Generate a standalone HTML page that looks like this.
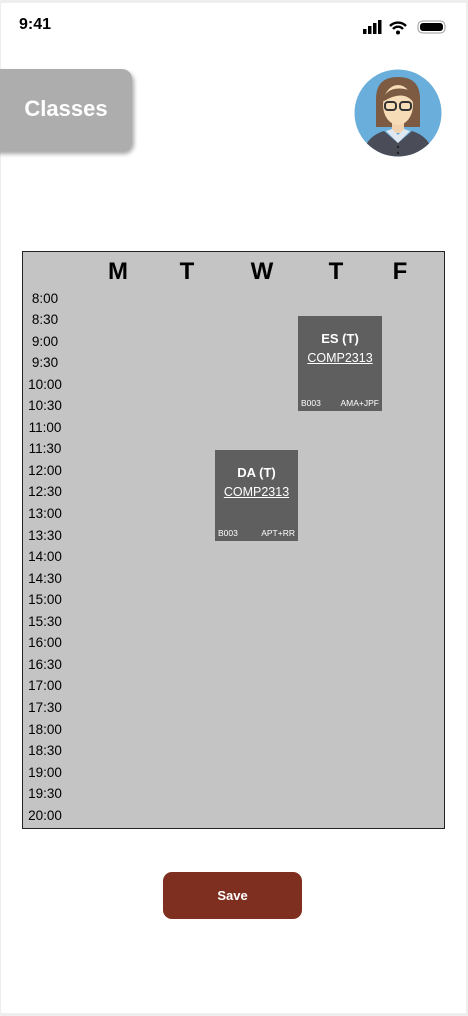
<!DOCTYPE html>
<html><head><style>
body{margin:0;width:468px;height:1016px;background:#eee;font-family:"Liberation Sans",sans-serif;position:relative;overflow:hidden}
.page{position:absolute;left:1px;top:3px;width:465px;height:1010px;background:#fff}
.abs{position:absolute}
.t{position:absolute;left:23px;width:44px;text-align:center;font-size:13.5px;color:#000}
.day{position:absolute;top:258px;font-size:24px;font-weight:bold;transform:translateX(-50%)}
.blk{position:absolute;background:#5f5f5f;color:#fff;text-align:center}
.blk b{display:block;font-size:13px;margin-top:15px}
.blk u{display:block;font-size:12.5px;margin-top:5px}
.blk .f{position:absolute;bottom:3px;left:3px;right:3px;font-size:8.5px;display:flex;justify-content:space-between}
</style></head><body>
<div class="page"></div>
<div class="abs" style="left:19px;top:16px;font-size:16px;font-weight:bold">9:41</div>
<svg class="abs" style="left:362px;top:18px" width="86" height="18">
<rect x="1" y="11" width="3.5" height="5" fill="#000"/><rect x="6" y="8" width="3.5" height="8"/><rect x="11" y="5" width="3.5" height="11"/><rect x="16" y="2" width="3.5" height="14"/>
<path d="M28 8a11 11 0 0 1 16 0M31 11a6.5 6.5 0 0 1 10 0" stroke="#000" stroke-width="2.4" fill="none"/><circle cx="36" cy="14.5" r="2"/>
<rect x="56" y="3" width="27" height="12" rx="4.5" fill="none" stroke="#999"/><rect x="58" y="5" width="23" height="8" rx="3"/>
</svg>
<div class="abs" style="left:-10px;top:69px;width:142px;height:82px;background:#adadad;border-radius:10px;box-shadow:2px 3px 4px rgba(0,0,0,.35);color:#fff;font-size:22px;font-weight:bold;line-height:80px;text-align:center;padding-left:10px;box-sizing:border-box">Classes</div>
<svg class="abs" style="left:354px;top:69px" width="88" height="88" viewBox="0 0 88 88">
<defs><clipPath id="c"><circle cx="44" cy="44" r="43.5"/></clipPath></defs>
<circle cx="44" cy="44" r="43.5" fill="#6aaedb"/>
<g clip-path="url(#c)">
<path d="M22 58 V30 Q22 8 44 8 Q66 8 66 30 V58Z" fill="#7d5a42"/>
<rect x="38" y="52" width="12" height="12" fill="#f2d2ae"/>
<path d="M8 90 Q10 68 30 62 L44 74 L58 62 Q78 68 80 90Z" fill="#4a4d58"/>
<path d="M32 62 L44 74 L56 62 L50 60 L44 66 L38 60Z" fill="#dfe8f0"/>
<ellipse cx="44" cy="36" rx="15" ry="20" fill="#f7dcb8"/>
<path d="M28 32 Q34 14 58 22 Q60 28 60 34 Q50 20 30 32Z" fill="#7d5a42"/>
<rect x="31" y="33" width="11" height="8" rx="3" fill="none" stroke="#333" stroke-width="2"/>
<rect x="46" y="33" width="11" height="8" rx="3" fill="none" stroke="#333" stroke-width="2"/>
<circle cx="44" cy="78" r="1.2" fill="#222"/><circle cx="44" cy="84" r="1.2" fill="#222"/>
</g></svg>
<div class="abs" style="left:22px;top:251px;width:421px;height:576px;background:#c4c4c4;border:1px solid #222"></div>
<div class="day" style="left:118px">M</div><div class="day" style="left:187px">T</div><div class="day" style="left:262px">W</div><div class="day" style="left:336px">T</div><div class="day" style="left:400px">F</div>
<div id="times"></div>
<script>
var h='';for(var i=0;i<25;i++){var hr=8+Math.floor(i/2),m=i%2?'30':'00';h+='<div class="t" style="top:'+(290.5+i*21.55)+'px">'+hr+':'+m+'</div>';}
document.getElementById('times').innerHTML=h;
</script>
<div class="blk" style="left:298px;top:316px;width:84px;height:95px"><b>ES (T)</b><u>COMP2313</u><div class="f"><span>B003</span><span>AMA+JPF</span></div></div>
<div class="blk" style="left:215px;top:450px;width:83px;height:91px"><b>DA (T)</b><u>COMP2313</u><div class="f"><span>B003</span><span>APT+RR</span></div></div>
<div class="abs" style="left:163px;top:872px;width:139px;height:47px;background:#7f2f1f;border-radius:9px;color:#fff;font-size:13px;font-weight:bold;line-height:47px;text-align:center">Save</div>
</body></html>
